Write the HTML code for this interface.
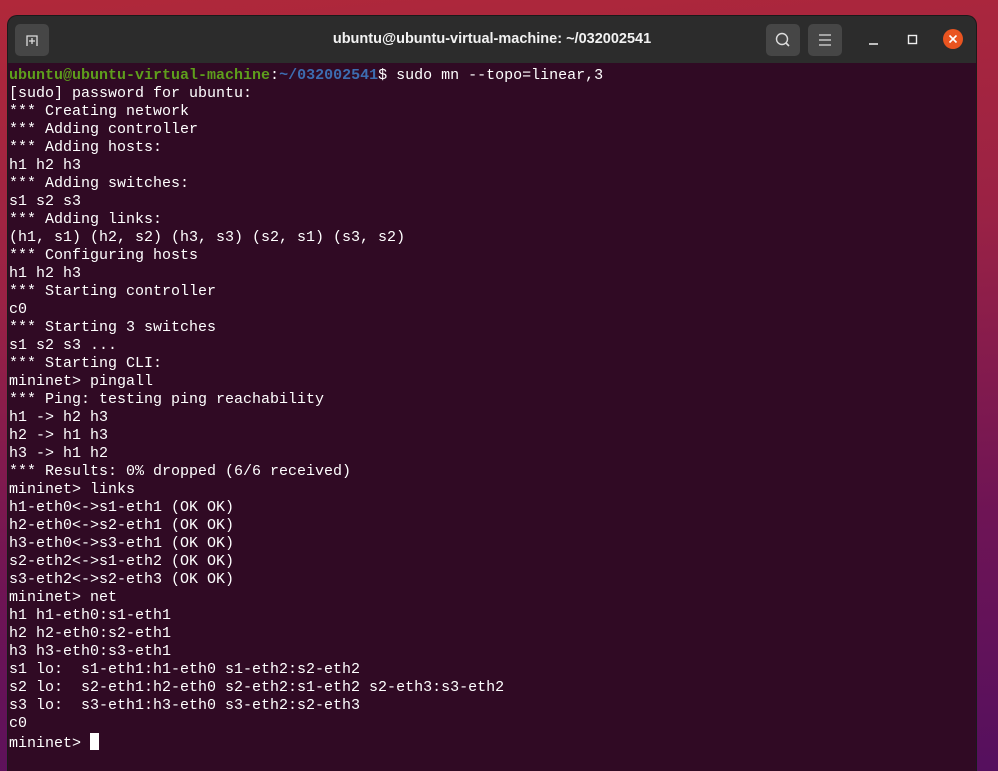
<!DOCTYPE html>
<html><head><style>
html,body{margin:0;width:998px;height:771px;overflow:hidden}
body{background:linear-gradient(175deg,#b0283a 0%,#9a2245 35%,#6e1455 70%,#55105e 100%);position:relative;font-family:"Liberation Sans",sans-serif}
.win{position:absolute;left:8px;top:16px;width:968px;height:755px;background:#300a24;border-radius:9px 9px 0 0;overflow:hidden;box-shadow:0 0 0 1px #1a1a1a}
.tb{height:47px;background:#2c2c2c;position:relative}
.btn{position:absolute;top:8px;width:34px;height:32px;background:#464646;border-radius:5px}
.title{position:absolute;left:0;right:0;top:15px;text-align:center;color:#f2f2f2;font-weight:bold;font-size:14.5px}
pre{margin:0;padding:4px 0 0 1px;font-family:"Liberation Mono",monospace;font-size:15px;line-height:18px;color:#ffffff}
.g{color:#5e9e1c;font-weight:bold}.b{color:#3d6cb0;font-weight:bold}
.cur{display:inline-block;width:9px;height:17px;background:#fff;vertical-align:-3px}
</style></head><body>
<div class="win">
<div class="tb">
<div class="btn" style="left:7px"><svg width="34" height="32"><path d="M12 22 V12 H22 V22 M14 17 H20 M17 14 V20" stroke="#ddd" stroke-width="1.3" fill="none"/></svg></div>
<div class="title">ubuntu@ubuntu-virtual-machine: ~/032002541</div>
<div class="btn" style="left:758px"><svg width="34" height="32"><circle cx="16" cy="15" r="5.5" stroke="#ddd" stroke-width="1.4" fill="none"/><path d="M20 19 L23 22" stroke="#ddd" stroke-width="1.6"/></svg></div>
<div class="btn" style="left:800px"><svg width="34" height="32"><path d="M11 11H23M11 16H23M11 21H23" stroke="#ddd" stroke-width="1.3"/></svg></div>
<svg style="position:absolute;left:860px;top:20px" width="12" height="10"><path d="M1 8H10" stroke="#eee" stroke-width="1.5"/></svg>
<svg style="position:absolute;left:899px;top:18px" width="12" height="12"><rect x="1.5" y="1.5" width="8" height="8" stroke="#eee" stroke-width="1.4" fill="none"/></svg>
<svg style="position:absolute;left:934px;top:12px" width="22" height="22"><circle cx="11" cy="11" r="10" fill="#e95420"/><path d="M7.5 7.5L14.5 14.5M14.5 7.5L7.5 14.5" stroke="#fff" stroke-width="1.6"/></svg>
</div>
<pre><span class="g">ubuntu@ubuntu-virtual-machine</span>:<span class="b">~/032002541</span>$ sudo mn --topo=linear,3
[sudo] password for ubuntu:
*** Creating network
*** Adding controller
*** Adding hosts:
h1 h2 h3
*** Adding switches:
s1 s2 s3
*** Adding links:
(h1, s1) (h2, s2) (h3, s3) (s2, s1) (s3, s2)
*** Configuring hosts
h1 h2 h3
*** Starting controller
c0
*** Starting 3 switches
s1 s2 s3 ...
*** Starting CLI:
mininet&gt; pingall
*** Ping: testing ping reachability
h1 -&gt; h2 h3
h2 -&gt; h1 h3
h3 -&gt; h1 h2
*** Results: 0% dropped (6/6 received)
mininet&gt; links
h1-eth0&lt;-&gt;s1-eth1 (OK OK)
h2-eth0&lt;-&gt;s2-eth1 (OK OK)
h3-eth0&lt;-&gt;s3-eth1 (OK OK)
s2-eth2&lt;-&gt;s1-eth2 (OK OK)
s3-eth2&lt;-&gt;s2-eth3 (OK OK)
mininet&gt; net
h1 h1-eth0:s1-eth1
h2 h2-eth0:s2-eth1
h3 h3-eth0:s3-eth1
s1 lo:  s1-eth1:h1-eth0 s1-eth2:s2-eth2
s2 lo:  s2-eth1:h2-eth0 s2-eth2:s1-eth2 s2-eth3:s3-eth2
s3 lo:  s3-eth1:h3-eth0 s3-eth2:s2-eth3
c0
mininet&gt; <span class="cur"></span></pre>
</div>
</body></html>
